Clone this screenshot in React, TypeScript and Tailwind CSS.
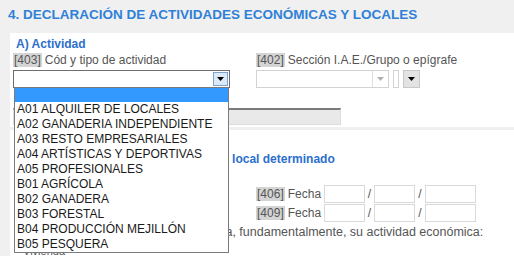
import React from 'react';

const items = [
  'A01 ALQUILER DE LOCALES',
  'A02 GANADERIA INDEPENDIENTE',
  'A03 RESTO EMPRESARIALES',
  'A04 ARTÍSTICAS Y DEPORTIVAS',
  'A05 PROFESIONALES',
  'B01 AGRÍCOLA',
  'B02 GANADERA',
  'B03 FORESTAL',
  'B04 PRODUCCIÓN MEJILLÓN',
  'B05 PESQUERA',
];

const Arrow: React.FC<{ color?: string }> = ({ color = '#000' }) => (
  <svg width="7" height="4" viewBox="0 0 7 4">
    <path d="M0 0h7L3.5 4z" fill={color} />
  </svg>
);

const Code: React.FC<{ n: string }> = ({ n }) => (
  <span className="bg-[#d4d4d4] px-[1px] mr-[3px]">[{n}]</span>
);

const DateBox: React.FC<{ w?: string }> = ({ w = 'w-[41px]' }) => (
  <div className={`${w} h-[18px] border border-[#d9d9d9] bg-white`} />
);

const App: React.FC = () => {
  return (
    <div className="relative w-[514px] h-[256px] overflow-hidden bg-[#f0f0f0] font-['Liberation_Sans',Arial,sans-serif] text-[12px] text-[#555]">
      {/* Section header */}
      <div className="h-[33px] pl-[8px] pt-[7px] text-[13.5px] leading-[15px] font-bold text-[#2f80d8]">
        4. DECLARACIÓN DE ACTIVIDADES ECONÓMICAS Y LOCALES
      </div>

      {/* A) Actividad */}
      <div className="ml-[10px] h-[94px] bg-white pl-[3px] pt-[4px]">
        <div className="pl-[3px] text-[12px] leading-[14px] font-bold text-[#2c6fce]">A) Actividad</div>
        <div className="flex mt-[2px]">
          <div className="w-[243px]">
            <div className="leading-[15px]"><Code n="403" />Cód y tipo de actividad</div>
            <div className="mt-[2px] w-[217px] h-[18px] border border-[#6e6e6e] bg-white flex justify-end p-[1px]">
              <div className="w-[15px] h-full border border-[#7fa3cf] bg-[#dce9f7] flex items-center justify-center">
                <Arrow />
              </div>
            </div>
          </div>
          <div>
            <div className="leading-[15px]"><Code n="402" />Sección I.A.E./Grupo o epígrafe</div>
            <div className="mt-[2px] flex items-center gap-[4px]">
              <div className="w-[133px] h-[18px] border border-[#d3d3d3] bg-white flex justify-end">
                <div className="w-[16px] h-full border-l border-[#dedede] flex items-center justify-center">
                  <Arrow color="#b0b0b0" />
                </div>
              </div>
              <div className="w-[6px] h-[18px] border border-[#d3d3d3] bg-white" />
              <div className="w-[17px] h-[18px] border border-[#c8c8c8] bg-[#e3e3e3] flex items-center justify-center">
                <Arrow />
              </div>
            </div>
          </div>
        </div>
        <div className="mt-[20px] w-[328px] h-[17px] border-t-2 border-[#7a7a7a] bg-[#e9e9e9] border-x border-b border-x-[#dcdcdc] border-b-[#dcdcdc]" />
      </div>

      {/* B) Local */}
      <div className="mt-[3px] ml-[10px] h-[130px] bg-white pl-[3px] pt-[22px]">
        <div className="pl-[3px] text-[12px] leading-[14px] font-bold text-[#2c6fce]">
          B) Indique si la actividad se ejerce en local determinado
        </div>
        <div className="flex mt-[19px]">
          <div className="w-[243px]" />
          <div className="flex flex-col gap-[1px]">
            {['406', '409'].map((n) => (
              <div key={n} className="flex items-center h-[18px]">
                <span className="w-[68px]"><Code n={n} />Fecha</span>
                <DateBox />
                <span className="w-[9px] text-center">/</span>
                <DateBox />
                <span className="w-[10px] text-center">/</span>
                <DateBox w="w-[51px]" />
              </div>
            ))}
          </div>
        </div>
        <div className="mt-[3px] pl-[4px] text-[12.5px] leading-[15px] whitespace-nowrap">
          Indique el lugar en el que se desarrolla, fundamentalmente, su actividad económica:
        </div>
        <div className="mt-[5px] pl-[10px] text-[11px] leading-[13px]">Vivienda</div>
      </div>

      {/* Open dropdown list */}
      <div className="absolute left-[14px] top-[87px] w-[215px] border border-[#7a7a7a] bg-white text-[12px] text-[#1a1a1a]">
        <div className="h-[14px] bg-[#3399ff]" />
        {items.map((t) => (
          <div key={t} className="h-[15px] leading-[15px] pl-[2px] whitespace-nowrap">{t}</div>
        ))}
      </div>
    </div>
  );
};

export default App;
